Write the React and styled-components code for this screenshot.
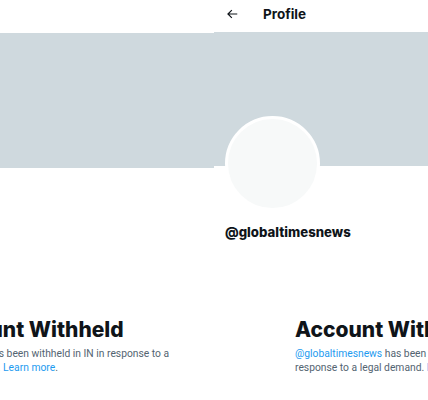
import React from "react";
import styled, { createGlobalStyle } from "styled-components";

const GlobalStyle = createGlobalStyle`
  * {
    box-sizing: border-box;
  }
  body {
    margin: 0;
    background: #ffffff;
    font-family: Inter, "Noto Sans", sans-serif;
    color: #0f1419;
  }
`;

function BackArrow() {
  return (
    <svg width="14" height="14" viewBox="0 0 24 24" fill="#0f1419">
      <path d="M7.414 13l5.043 5.04-1.414 1.42L3.586 12l7.457-7.46 1.414 1.42L7.414 11H21v2H7.414z" />
    </svg>
  );
}

function Withheld({ handle, shift }) {
  return (
    <WithheldStyle $shift={shift}>
      <h2>Account Withheld</h2>
      <p>
        <a>{handle}</a> has been withheld in IN in response to a legal demand.{" "}
        <a>Learn more</a>.
      </p>
    </WithheldStyle>
  );
}

export default function App() {
  return (
    <>
      <GlobalStyle />
      <Screen>
        <Pane $top={33}>
          <Banner $height={135} />
          <Withheld handle="@XHNews" shift={-64} />
        </Pane>
        <Pane $top={0}>
          <Header>
            <BackArrow />
            <span>Profile</span>
          </Header>
          <Banner $height={134} />
          <AvatarRow>
            <Avatar />
          </AvatarRow>
          <Handle>@globaltimesnews</Handle>
          <Withheld handle="@globaltimesnews" shift={81} />
        </Pane>
      </Screen>
    </>
  );
}

const Screen = styled.div`
  display: flex;
  width: 428px;
  height: 400px;
  overflow: hidden;
`;

const Pane = styled.div`
  width: 214px;
  flex-shrink: 0;
  overflow: hidden;
  padding-top: ${(p) => p.$top}px;
  display: flex;
  flex-direction: column;
`;

const Header = styled.div`
  height: 32px;
  display: flex;
  align-items: center;
  gap: 24px;
  padding: 0 0 4px 11px;
  span {
    font-size: 13.5px;
    font-weight: 700;
  }
`;

const Banner = styled.div`
  height: ${(p) => p.$height}px;
  background: #cfd9de;
  flex-shrink: 0;
`;

const AvatarRow = styled.div`
  display: flex;
  padding-left: 11px;
  margin-top: -50px;
`;

const Avatar = styled.div`
  width: 95px;
  height: 95px;
  border-radius: 50%;
  background: #f7f9f9;
  border: 3px solid #ffffff;
`;

const Handle = styled.div`
  margin-top: 12px;
  padding-left: 11px;
  font-size: 13.2px;
  line-height: 18px;
  font-weight: 800;
`;

const WithheldStyle = styled.div`
  width: 235px;
  flex-shrink: 0;
  margin-top: ${(p) => (p.$shift < 0 ? 149 : 76)}px;
  margin-left: ${(p) => p.$shift}px;
  h2 {
    margin: 0;
    font-size: 21px;
    line-height: 26px;
    font-weight: 800;
    white-space: nowrap;
  }
  p {
    margin: 4px 0 0;
    font-family: Roboto, "Noto Sans", sans-serif;
    font-size: 10.3px;
    line-height: 13.5px;
    color: #536471;
  }
  a {
    color: #1d9bf0;
  }
`;
